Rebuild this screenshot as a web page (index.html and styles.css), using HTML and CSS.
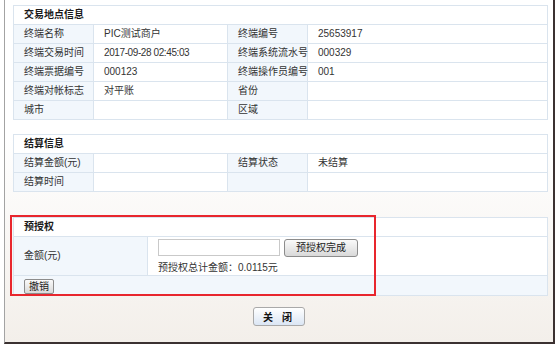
FILE: index.html
```
<!DOCTYPE html>
<html lang="zh-CN">
<head>
  <meta charset="UTF-8">
  <title>交易详情</title>
  <link rel="stylesheet" href="styles.css">
</head>
<body>
  <div class="dialog">
    <table class="info">
      <colgroup>
        <col class="c1"><col class="c2"><col class="c3"><col>
      </colgroup>
      <tr><th colspan="4">交易地点信息</th></tr>
      <tr><td class="lbl">终端名称</td><td>PIC测试商户</td><td class="lbl">终端编号</td><td>25653917</td></tr>
      <tr><td class="lbl">终端交易时间</td><td class="time">2017-09-28 02:45:03</td><td class="lbl">终端系统流水号</td><td>000329</td></tr>
      <tr><td class="lbl">终端票据编号</td><td>000123</td><td class="lbl">终端操作员编号</td><td>001</td></tr>
      <tr><td class="lbl">终端对帐标志</td><td>对平账</td><td class="lbl">省份</td><td></td></tr>
      <tr><td class="lbl">城市</td><td></td><td class="lbl">区域</td><td></td></tr>
    </table>

    <table class="info settle">
      <colgroup>
        <col class="c1"><col class="c2"><col class="c3"><col>
      </colgroup>
      <tr><th colspan="4">结算信息</th></tr>
      <tr><td class="lbl">结算金额(元)</td><td></td><td class="lbl">结算状态</td><td>未结算</td></tr>
      <tr><td class="lbl">结算时间</td><td></td><td class="lbl"></td><td></td></tr>
    </table>

    <div class="preauth-wrap">
      <table class="info preauth">
        <colgroup>
          <col class="w1"><col>
        </colgroup>
        <tr><th colspan="2">预授权</th></tr>
        <tr class="amount-row">
          <td class="lbl">金额(元)</td>
          <td>
            <div class="amount-line">
              <input type="text" class="amount-input">
              <button class="btn">预授权完成</button>
            </div>
            <div class="total">预授权总计金额：0.0115元</div>
          </td>
        </tr>
        <tr class="cancel-row"><td colspan="2"><button class="btn small">撤销</button></td></tr>
      </table>
      <div class="mark"></div>
    </div>

    <div class="footer">
      <button class="close-btn">关 闭</button>
    </div>
  </div>
</body>
</html>
```

FILE: styles.css
```
body {
  margin: 0;
  background: #fff;
  font-family: "Liberation Sans", "Noto Sans CJK SC", sans-serif;
  font-size: 10px;
  color: #333;
}
.dialog {
  margin-left: 4px;
  width: 551px;
  height: 344px;
  border-left: 1px solid #a3a3a3;
  border-right: 2px solid #3b3131;
  border-bottom: 2px solid #3b3131;
  background: linear-gradient(#ffffff 40%, #f3efea);
  padding: 5px 0 0 8px;
  box-sizing: border-box;
}
table.info {
  width: 535px;
  border-collapse: collapse;
  table-layout: fixed;
  background: #fff;
}
.info th,
.info td {
  border: 1px solid #dae4ee;
  height: 18px;
  padding: 0 10px;
  text-align: left;
  white-space: nowrap;
  line-height: 14px;
}
.info th {
  font-size: 10px;
  font-weight: bold;
  color: #1a1a1a;
  background: #fff;
}
.info td.lbl {
  background: #f2f7fc;
}
.info td.time {
  letter-spacing: -0.4px;
}
col.c1 { width: 80px; }
col.c2 { width: 134px; }
col.c3 { width: 80px; }
col.w1 { width: 134px; }

.settle {
  margin-top: 14px;
}

.preauth-wrap {
  position: relative;
  margin-top: 25px;
}
.preauth .amount-row td {
  height: 37px;
  vertical-align: middle;
}
.amount-row td + td {
  vertical-align: top;
  padding-top: 1px;
}
.amount-line {
  display: flex;
  align-items: center;
  gap: 4px;
}
.amount-input {
  width: 122px;
  height: 17px;
  box-sizing: border-box;
  border: 1px solid #c9c9c9;
  margin: 0;
  padding: 0 2px;
}
.total {
  margin-top: 4px;
}
.btn {
  font-family: inherit;
  font-size: 10px;
  color: #222;
  height: 18px;
  width: 74px;
  padding: 0;
  margin: 0;
  border: 1px solid #8c8c8c;
  border-radius: 3px;
  background: linear-gradient(#fafafa, #d9d9d9);
  line-height: 14px;
}
.btn.small {
  width: 30px;
  height: 15px;
  border-radius: 2px;
  line-height: 12px;
  display: block;
}
.cancel-row td {
  background: #f2f7fc;
  height: 18px;
  vertical-align: bottom;
  padding-bottom: 1px;
}
.mark {
  position: absolute;
  left: -3px;
  top: -2px;
  width: 366px;
  height: 81px;
  border: 2px solid #e8262d;
  box-sizing: border-box;
}

.footer {
  display: flex;
  justify-content: center;
  margin-top: 11px;
  padding-right: 8px;
}
.close-btn {
  font-family: inherit;
  font-size: 10px;
  font-weight: bold;
  color: #111;
  width: 52px;
  height: 19px;
  padding: 0;
  border: 1px solid #a9a9a9;
  border-radius: 3px;
  background: linear-gradient(#ffffff, #dbe6f4);
  letter-spacing: 3px;
}
```
